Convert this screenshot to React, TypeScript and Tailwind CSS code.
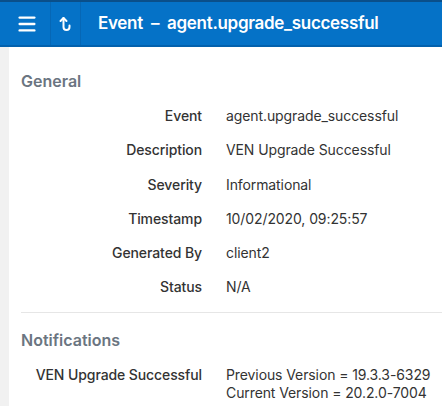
import { Menu } from "lucide-react"

const general = [
  { label: "Event", value: "agent.upgrade_successful" },
  { label: "Description", value: "VEN Upgrade Successful" },
  { label: "Severity", value: "Informational" },
  { label: "Timestamp", value: "10/02/2020, 09:25:57" },
  { label: "Generated By", value: "client2" },
  { label: "Status", value: "N/A" },
]

function UpIcon() {
  return (
    <svg width="14" height="16" viewBox="0 0 14 16" fill="none" stroke="currentColor" strokeWidth="2" strokeLinecap="round" strokeLinejoin="round">
      <path d="M1.5 5 4.5 2 7.5 5" />
      <path d="M4.5 2v9a3 3 0 0 0 6 0V9.5" />
    </svg>
  )
}

export default function App() {
  return (
    <div className="flex h-[406px] w-[442px] flex-col overflow-hidden bg-white font-['Inter',sans-serif] text-[#333]">
      <header className="flex h-[47px] shrink-0 items-stretch border-t-2 border-b-2 border-t-[#0a4f8a] border-b-[#0361ad] bg-[#0572c7] text-white">
        <div className="flex w-[51px] items-center justify-center border-r border-[#0667b5] pl-1">
          <Menu className="h-[22px] w-[22px]" strokeWidth={2.6} />
        </div>
        <div className="flex w-[30px] items-center justify-center border-r border-[#0667b5]">
          <UpIcon />
        </div>
        <h1 className="flex items-center pl-[17px] text-[17px] font-semibold tracking-[-0.3px]">
          Event&nbsp;&nbsp;–&nbsp;&nbsp;agent.upgrade_successful
        </h1>
      </header>

      <div className="flex flex-1">
        <div className="w-[9px] shrink-0 bg-[#f1f1f1]" />
        <main className="flex-1 pl-[12px]">
          <h2 className="mt-[22px] text-[16px] font-semibold text-[#6b7581]">General</h2>
          <dl className="mt-[13px] grid grid-cols-[181px_1fr] gap-x-[24px] gap-y-[14px] text-[14px] leading-[20.3px] tracking-[-0.1px]">
            {general.map((row) => (
              <div key={row.label} className="contents">
                <dt className="text-right font-medium text-[#333]">{row.label}</dt>
                <dd className="text-[#333]">{row.value}</dd>
              </div>
            ))}
          </dl>
          <div className="mt-[14px] border-t border-[#e6e6e6]" />
          <h2 className="mt-[15px] text-[16px] font-semibold text-[#6b7581]">Notifications</h2>
          <dl className="mt-[14px] grid grid-cols-[181px_1fr] gap-x-[24px] text-[14px] leading-[18px] tracking-[-0.1px]">
            <dt className="text-right font-medium text-[#333]">VEN Upgrade Successful</dt>
            <dd className="text-[#333]">
              <div>Previous Version = 19.3.3-6329</div>
              <div>Current Version = 20.2.0-7004</div>
            </dd>
          </dl>
        </main>
      </div>
    </div>
  )
}
